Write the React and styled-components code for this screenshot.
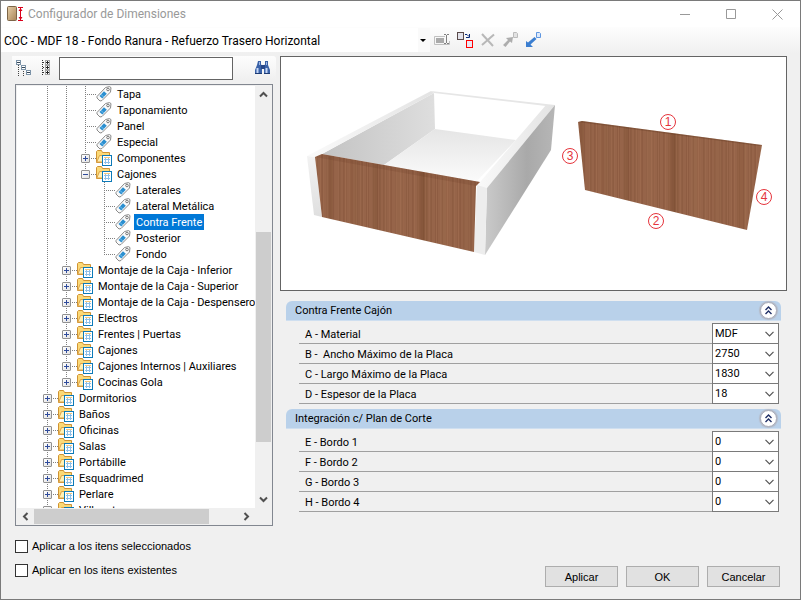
import { useState } from 'react'
import styled, { createGlobalStyle } from 'styled-components'

const tree = [
  { label: 'Tapa', type: 'tag', guides: 'll', end: 'mid' },
  { label: 'Taponamiento', type: 'tag', guides: 'll', end: 'mid' },
  { label: 'Panel', type: 'tag', guides: 'll', end: 'mid' },
  { label: 'Especial', type: 'tag', guides: 'll', end: 'mid' },
  { label: 'Componentes', type: 'folder', guides: 'll', end: 'mid' },
  { label: 'Cajones', type: 'folder', guides: 'll', end: 'last', open: true },
  { label: 'Laterales', type: 'tag', guides: 'll-', end: 'mid' },
  { label: 'Lateral Metálica', type: 'tag', guides: 'll-', end: 'mid' },
  { label: 'Contra Frente', type: 'tag', guides: 'll-', end: 'mid' },
  { label: 'Posterior', type: 'tag', guides: 'll-', end: 'mid' },
  { label: 'Fondo', type: 'tag', guides: 'll-', end: 'last' },
  { label: 'Montaje de la Caja - Inferior', type: 'folder', guides: 'l', end: 'mid' },
  { label: 'Montaje de la Caja - Superior', type: 'folder', guides: 'l', end: 'mid' },
  { label: 'Montaje de la Caja - Despensero', type: 'folder', guides: 'l', end: 'mid' },
  { label: 'Electros', type: 'folder', guides: 'l', end: 'mid' },
  { label: 'Frentes | Puertas', type: 'folder', guides: 'l', end: 'mid' },
  { label: 'Cajones', type: 'folder', guides: 'l', end: 'mid' },
  { label: 'Cajones Internos | Auxiliares', type: 'folder', guides: 'l', end: 'mid' },
  { label: 'Cocinas Gola', type: 'folder', guides: 'l', end: 'last' },
  { label: 'Dormitorios', type: 'folder', guides: '', end: 'mid' },
  { label: 'Baños', type: 'folder', guides: '', end: 'mid' },
  { label: 'Oficinas', type: 'folder', guides: '', end: 'mid' },
  { label: 'Salas', type: 'folder', guides: '', end: 'mid' },
  { label: 'Portábille', type: 'folder', guides: '', end: 'mid' },
  { label: 'Esquadrimed', type: 'folder', guides: '', end: 'mid' },
  { label: 'Perlare', type: 'folder', guides: '', end: 'mid' },
  { label: 'Villanet', type: 'folder', guides: '', end: 'mid' },
]

const groups = [
  {
    title: 'Contra Frente Cajón',
    fields: [
      { id: 'a', label: 'A - Material', value: 'MDF' },
      { id: 'b', label: 'B -  Ancho Máximo de la Placa', value: '2750' },
      { id: 'c', label: 'C - Largo Máximo de la Placa', value: '1830' },
      { id: 'd', label: 'D - Espesor de la Placa', value: '18' },
    ],
  },
  {
    title: 'Integración c/ Plan de Corte',
    fields: [
      { id: 'e', label: 'E - Bordo 1', value: '0' },
      { id: 'f', label: 'F - Bordo 2', value: '0' },
      { id: 'g', label: 'G - Bordo 3', value: '0' },
      { id: 'h', label: 'H - Bordo 4', value: '0' },
    ],
  },
]

/* icons */
const AppIcon = () => (
  <svg width="16" height="16" viewBox="0 0 16 16" aria-hidden="true">
    <defs>
      <linearGradient id="door" x1="0" y1="0" x2="1" y2="1">
        <stop offset="0" stopColor="#e6cfa8" />
        <stop offset="1" stopColor="#a98558" />
      </linearGradient>
    </defs>
    <rect x="0.5" y="0.5" width="9" height="14" rx="1" fill="url(#door)" stroke="#7d6547" />
    <path d="M11 1.5h5M11 14.5h5M13.500 2v12" stroke="#d9001b" />
    <path d="M11.500 5l2-3 2 3zM11.500 11l2 3 2-3z" fill="#d9001b" />
  </svg>
)

const RenameIcon = () => (
  <svg width="16" height="16" viewBox="0 0 16 16" aria-hidden="true">
    <path d="M11 4.500H.5v8H15.500V9" fill="none" stroke="#c0c0c0" />
    <rect x="2" y="6" width="8" height="5" fill="#aaa" />
    <path d="M10 2.500h2M13 2.500h2M12.500 3v8M10 11.500h2M13 11.500h2" stroke="#808080" />
  </svg>
)

const CopyIcon = () => (
  <svg width="16" height="16" viewBox="0 0 16 16" aria-hidden="true">
    <rect x="0.500" y="0.500" width="6" height="7" fill="#e2e2ea" stroke="#5a4a4a" />
    <rect x="9.500" y="8.500" width="6" height="7" fill="#e8e8f4" stroke="#f00" />
    <path d="M8 2.500h2l2 2M12.500 2v3.500H9" fill="none" stroke="#0a2a7a" />
  </svg>
)

const DeleteIcon = () => (
  <svg width="16" height="16" viewBox="0 0 16 16" aria-hidden="true">
    <path d="M2 2l11 12" stroke="#b8b8b8" strokeWidth="2" />
    <path d="M14 2.500L2 13" stroke="#b8b8b8" strokeWidth="2" />
  </svg>
)

const ExportIcon = () => (
  <svg width="16" height="16" viewBox="0 0 16 16" aria-hidden="true">
    <path d="M10.500.5h3l1 1v4h-4z" fill="#e3e3e3" stroke="#bcbcbc" />
    <path d="M0 13l5-5-2-2 7-1-1 6-2-1.500L2.500 15z" fill="#adadad" />
  </svg>
)

const ImportIcon = () => (
  <svg width="16" height="16" viewBox="0 0 16 16" aria-hidden="true">
    <path d="M10.500.5h3l1 1v4h-4z" fill="#dce9fb" stroke="#5f96e0" />
    <path d="M0 15V9l2 1.500L8.500 5l2 2-6 5.500L7 15z" fill="#3b7ed0" />
  </svg>
)

const CollapseTreeIcon = () => (
  <svg width="16" height="16" viewBox="0 0 16 16" aria-hidden="true">
    <path d="M2.500 5v11M7.500 9v7M5 6.500h2M10 11.500h2" stroke="#444" strokeDasharray="1 1" />
    <g fill="#fff" stroke="#7c93a8">
      <rect x="0.500" y="0.500" width="4" height="4" />
      <rect x="5.500" y="5.500" width="4" height="4" />
      <rect x="10.500" y="10.500" width="4" height="4" />
    </g>
    <path d="M1 2.500h3M6 7.500h3M11 12.500h3" stroke="#345" />
  </svg>
)

const ExpandTreeIcon = () => (
  <svg width="16" height="16" viewBox="0 0 16 16" aria-hidden="true">
    <path d="M3.500 0v16M4 2.500h2M4 7.500h2M4 12.500h2" stroke="#333" strokeDasharray="1 1" />
    <g fill="#fff" stroke="#a5a5a5">
      <rect x="6.500" y="0.500" width="4" height="4" />
      <rect x="6.500" y="5.500" width="4" height="4" />
      <rect x="6.500" y="10.500" width="4" height="4" />
    </g>
    <path d="M7 2.500h3M8.500 1v3M7 7.500h3M8.500 6v3M7 12.500h3M8.500 11v3" stroke="#222" />
  </svg>
)

const BinocularsIcon = () => (
  <svg width="16" height="16" viewBox="0 0 16 16" aria-hidden="true">
    <path d="M3 1h3v3l1 3v7H0v-4l2-5zM10 1h3v4l2 5v4H9V7l1-3z" fill="#3a62a8" />
    <path d="M6 5h4v4H6z" fill="#27488a" />
    <path d="M2.500 8v5M11.500 8v5" stroke="#c6d7f5" strokeWidth="2" />
    <path d="M4.500 2v3M11.500 2v3" stroke="#9db8e6" />
    <path d="M0 13.500h7M9 13.500h6" stroke="#1d3b73" />
  </svg>
)

const TagIcon = () => (
  <svg width="16" height="16" viewBox="0 0 16 16" aria-hidden="true">
    <path d="M1 10.500L9.500 1.500 13.500.6l1.500 1-.5 4.400L6 14.500l-2 .5-3-3z" fill="#fafafa" stroke="#8a8a8a" />
    <path d="M3.500 10L8 5.200l2.800 2.600-4.500 4.800z" fill="#2b8fd0" />
    <path d="M5 8.500l3 2.800" stroke="#74bdea" />
    <circle cx="12" cy="3.500" r="1.300" fill="#fff" stroke="#777" />
  </svg>
)

const FolderIcon = () => (
  <svg width="16" height="16" viewBox="0 0 16 16" aria-hidden="true">
    <path d="M.5 12.500v-11l1-1h4l1 2h7v3l1 1v6z" fill="#fbd977" stroke="#cf9334" />
    <path d="M.8 12L3.500 5.500h11L12 12z" fill="#fff0b5" stroke="#dca247" />
    <rect x="6.500" y="5.500" width="9" height="10" fill="#fff" stroke="#0d7ab8" />
    <path d="M8 9.500h6M8 12.500h6M9.500 8v6M12.500 8v6" stroke="#8fc0e8" />
    <path d="M8 7.500h6" stroke="#f4c97e" />
  </svg>
)

const Chevron = () => (
  <svg width="9" height="6" viewBox="0 0 9 6" aria-hidden="true">
    <path d="M.5.800l4 4 4-4" fill="none" stroke="#555" strokeWidth="1.200" />
  </svg>
)

const DoubleChevron = () => (
  <svg width="9" height="9" viewBox="0 0 9 9" aria-hidden="true">
    <path d="M1.500 4l3-3 3 3M1.500 8l3-3 3 3" fill="none" stroke="#1f2f66" strokeWidth="1.400" />
  </svg>
)

const ScrollArrow = ({ d }) => (
  <svg width="9" height="9" viewBox="0 0 9 9" aria-hidden="true">
    <path d={d} fill="none" stroke="#505050" strokeWidth="2" />
  </svg>
)

/* wood grain: soft vertical streaks of uneven width */
const grain = Array.from({ length: 150 }, (_, i) => ({
  x: (i * 97) % 251,
  width: 1 + ((i * 7) % 5) * ((i * 3) % 4 === 0 ? 2 : 0),
  light: i % 3 === 0,
  opacity: 0.05 + ((i * 13) % 8) / 90,
}))

const marks = [
  { n: 1, x: 388, y: 67 },
  { n: 2, x: 376, y: 166 },
  { n: 3, x: 290, y: 101 },
  { n: 4, x: 484, y: 142 },
]

const Drawing = () => (
  <svg width="100%" height="233" viewBox="1 2 505 233" role="img" aria-label="Contra Frente">
    <defs>
      <pattern id="wood" width="251" height="240" patternUnits="userSpaceOnUse">
        <rect width="251" height="240" fill="#966449" />
        {grain.map((g, i) => (
          <rect
            key={i}
            x={g.x}
            width={g.width}
            height="240"
            fill={g.light ? '#c08b68' : '#54290f'}
            opacity={g.opacity}
          />
        ))}
      </pattern>
      <linearGradient id="inner" x1="0" x2="1">
        <stop offset="0" stopColor="#c3c3c3" />
        <stop offset="1" stopColor="#dedede" />
      </linearGradient>
      <linearGradient id="floor" x1="0.500" y1="0" x2="0.500" y2="1">
        <stop offset="0" stopColor="#e5e5e5" />
        <stop offset="1" stopColor="#fbfbfb" />
      </linearGradient>
      <linearGradient id="outer" x1="0" x2="1">
        <stop offset="0" stopColor="#cacaca" />
        <stop offset="0.600" stopColor="#a9a9a9" />
        <stop offset="1" stopColor="#b6b6b6" />
      </linearGradient>
      <linearGradient id="endLeft" x1="0" y1="0" x2="0" y2="1">
        <stop offset="0" stopColor="#f2f2f2" />
        <stop offset="1" stopColor="#dfdfdf" />
      </linearGradient>
      <linearGradient id="rim" x1="0" x2="1">
        <stop offset="0" stopColor="#fafafa" />
        <stop offset="1" stopColor="#e3e3e3" />
      </linearGradient>
    </defs>
    <path d="M42 99L154 38l1 36-51 36z" fill="url(#inner)" />
    <path d="M155 74l81 11-40 42-92-17z" fill="url(#floor)" />
    <path d="M27 101L151 36l3 2L42 99l-7 3z" fill="url(#rim)" />
    <path d="M151 36l124 14-9 1-112-13z" fill="#e6e6e6" />
    <path d="M266 50l9 0-68 83-11-2 4-4z" fill="url(#rim)" />
    <path d="M275 50l-4 45-66 105 2-67z" fill="url(#outer)" />
    <path d="M27 101l8 1 7 60-8-2z" fill="url(#endLeft)" />
    <path d="M197 130l10 3-2 67-11-3z" fill="#ededed" />
    <path d="M35 102l7-3 158 28-4 4-2 66L42 162z" fill="url(#wood)" />
    <path d="M35 102l7-3 158 28-4 4z" fill="#5b321c" opacity="0.150" />
    <path d="M298 67l4-1 180 24-15 85-162-40z" fill="url(#wood)" />
    <path d="M298 67l4-1 180 24-3 1z" fill="#5b321c" opacity="0.300" />
    {marks.map(({ n, x, y }) => (
      <g key={n}>
        <circle cx={x} cy={y} r="7.500" fill="#fff" stroke="#e5343c" />
        <MarkText x={x} y={y + 4} textAnchor="middle">{n}</MarkText>
      </g>
    ))}
  </svg>
)

const TreeItem = ({ item, selected, onSelect }) => (
  <TreeRow>
    {item.guides.split('').map((g, index) => (
      <Guide key={index} $line={g === 'l'} />
    ))}
    <Branch $last={item.end === 'last'}>
      {item.type === 'folder' && (
        <Expander type="button" aria-label={item.label} aria-expanded={!!item.open}>
          <svg width="7" height="7" viewBox="0 0 7 7" aria-hidden="true">
            <path d={item.open ? 'M1 3.500h5' : 'M1 3.500h5M3.500 1v5'} stroke="#2f4b9b" />
          </svg>
        </Expander>
      )}
    </Branch>
    {item.type === 'tag' ? <TagIcon /> : <FolderIcon />}
    <NodeLabel type="button" $selected={selected} onClick={onSelect}>{item.label}</NodeLabel>
  </TreeRow>
)

const Group = ({ group }) => (
  <GroupBox>
    <GroupHeader>
      <h2>{group.title}</h2>
      <CollapseButton type="button" aria-label={`Contraer ${group.title}`}>
        <DoubleChevron />
      </CollapseButton>
    </GroupHeader>
    <Fields>
      {group.fields.map((field) => (
        <FieldRow key={field.id}>
          <label htmlFor={`field-${field.id}`}>{field.label}</label>
          <SelectWrap>
            <select id={`field-${field.id}`} defaultValue={field.value}>
              <option>{field.value}</option>
            </select>
            <Chevron />
          </SelectWrap>
        </FieldRow>
      ))}
    </Fields>
  </GroupBox>
)

const App = () => {
  const [selected, setSelected] = useState(8)

  return (
    <>
      <GlobalStyle />
      <Window>
        <TitleBar>
          <AppIcon />
          <h1>Configurador de Dimensiones</h1>
          <WindowButton type="button" aria-label="Minimizar">
            <svg width="11" height="11" viewBox="0 0 11 11"><path d="M0 5.500h10" stroke="#999" /></svg>
          </WindowButton>
          <WindowButton type="button" aria-label="Maximizar">
            <svg width="11" height="11" viewBox="0 0 11 11"><path d="M.5.5h9v9h-9z" fill="none" stroke="#999" /></svg>
          </WindowButton>
          <WindowButton type="button" aria-label="Cerrar">
            <svg width="11" height="11" viewBox="0 0 11 11"><path d="M.5.5l10 10M10.500.5l-10 10" stroke="#999" /></svg>
          </WindowButton>
        </TitleBar>

        <Toolbar>
          <ModelSelect>
            <select aria-label="Modelo">
              <option>COC - MDF 18 - Fondo Ranura - Refuerzo Trasero Horizontal</option>
            </select>
            <svg width="6" height="3" viewBox="0 0 6 3" aria-hidden="true"><path d="M0 0h6L3 3z" /></svg>
          </ModelSelect>
          <ToolButton type="button" aria-label="Renombrar"><RenameIcon /></ToolButton>
          <ToolButton type="button" aria-label="Copiar"><CopyIcon /></ToolButton>
          <ToolButton type="button" aria-label="Eliminar"><DeleteIcon /></ToolButton>
          <ToolButton type="button" aria-label="Exportar"><ExportIcon /></ToolButton>
          <ToolButton type="button" aria-label="Importar"><ImportIcon /></ToolButton>
        </Toolbar>

        <Body>
          <SidePanel>
            <SearchBar>
              <ToolButton type="button" aria-label="Contraer todo"><CollapseTreeIcon /></ToolButton>
              <ToolButton type="button" aria-label="Expandir todo"><ExpandTreeIcon /></ToolButton>
              <input type="text" aria-label="Buscar" />
              <ToolButton type="button" aria-label="Buscar siguiente"><BinocularsIcon /></ToolButton>
            </SearchBar>
            <TreeBox>
              <TreeView>
                {tree.map((item, index) => (
                  <TreeItem
                    key={index}
                    item={item}
                    selected={index === selected}
                    onSelect={() => setSelected(index)}
                  />
                ))}
              </TreeView>
              <VerticalBar>
                <ScrollArrow d="M1 6.500L4.500 3 8 6.500" />
                <VerticalThumb />
                <ScrollArrow d="M1 2.500L4.500 6 8 2.500" />
              </VerticalBar>
              <HorizontalBar>
                <ScrollArrow d="M6.500 1L3 4.500 6.500 8" />
                <HorizontalThumb />
                <ScrollArrow d="M2.500 1L6 4.500 2.500 8" />
              </HorizontalBar>
            </TreeBox>
          </SidePanel>

          <MainPanel>
            <Preview><Drawing /></Preview>
            {groups.map((group) => <Group key={group.title} group={group} />)}
          </MainPanel>
        </Body>

        <Footer>
          <Checks>
            <CheckLabel><input type="checkbox" />Aplicar a los itens seleccionados</CheckLabel>
            <CheckLabel><input type="checkbox" />Aplicar en los itens existentes</CheckLabel>
          </Checks>
          <Actions>
            <ActionButton type="button">Aplicar</ActionButton>
            <ActionButton type="button">OK</ActionButton>
            <ActionButton type="button">Cancelar</ActionButton>
          </Actions>
        </Footer>
      </Window>
    </>
  )
}

const GlobalStyle = createGlobalStyle`
  * {
    box-sizing: border-box;
  }
  body {
    margin: 0;
    color: #000;
    background: #f0f0f0;
    font: 11px/16px Roboto, "Liberation Sans", sans-serif;
  }
  h1, h2 {
    margin: 0;
    font-weight: 400;
  }
  button, input, select {
    margin: 0;
    padding: 0;
    border: 0;
    border-radius: 0;
    color: inherit;
    background: transparent;
    font: inherit;
  }
  svg {
    display: block;
    flex: none;
  }
`

const Window = styled.div`
  display: flex;
  flex-direction: column;
  height: 100vh;
  min-height: 600px;
  border: 1px solid #7a7a7a;
  background: #f0f0f0;
`

const TitleBar = styled.header`
  display: flex;
  align-items: center;
  height: 26px;
  padding-left: 6px;
  background: #fff;

  h1 {
    flex: 1;
    margin-left: 5px;
    color: #999;
    font-size: 12px;
    line-height: 16px;
  }
`

const WindowButton = styled.button`
  display: grid;
  place-items: center;
  width: 46px;
  height: 24px;
`

const Toolbar = styled.div`
  display: flex;
  align-items: center;
  height: 26px;
  background: linear-gradient(#fdfdfd, #f0f0f0);
`

const ModelSelect = styled.div`
  display: flex;
  align-items: center;
  width: 429px;
  height: 24px;
  padding-right: 4px;
  background: linear-gradient(to left, #fafafa 12px, #fff 12px);

  select {
    flex: 1;
    height: 24px;
    padding: 2px 0 0 3px;
    appearance: none;
    font-size: 12px;
  }
`

const ToolButton = styled.button`
  display: grid;
  place-items: center;
  width: 23px;
  height: 22px;
`

const Body = styled.main`
  display: flex;
  gap: 4px;
  flex: 1;
  min-height: 0;
  padding: 3px 13px 0 11px;
`

const SidePanel = styled.section`
  display: flex;
  flex-direction: column;
  flex: none;
  width: 264px;
`

const SearchBar = styled.div`
  display: flex;
  align-items: center;
  height: 24px;
  margin-bottom: 4px;
  border-radius: 0 3px 3px 0;
  background: linear-gradient(#fdfdfd, #f0f0f0);

  input {
    width: 174px;
    height: 23px;
    margin: 0 18px 0 1px;
    padding: 0 4px;
    border: 1px solid #646464;
    background: #fff;
  }
`

const TreeBox = styled.div`
  display: grid;
  grid-template-columns: 1fr 16px;
  grid-template-rows: 1fr 16px;
  flex: 1;
  min-height: 0;
  margin: 0 3px;
  padding: 1px;
  border: 1px solid #828790;
  background: #f0f0f0;
`

const TreeView = styled.ul`
  min-height: 0;
  margin: 0;
  padding: 0 0 0 21px;
  overflow: hidden;
  list-style: none;
  background: #fff;
`

const TreeRow = styled.li`
  display: flex;
  height: 16px;
`

const Guide = styled.span`
  flex: none;
  width: 19px;
  height: 16px;
  background: ${({ $line }) => $line
    ? 'repeating-linear-gradient(#808080 0 1px, transparent 1px 2px) 9px 0 / 1px 16px no-repeat'
    : 'none'};
`

const Branch = styled.span`
  flex: none;
  width: 20px;
  height: 16px;
  padding: 4px 0 0 5px;
  background:
    repeating-linear-gradient(#808080 0 1px, transparent 1px 2px) 9px 0 / 1px ${({ $last }) => ($last ? 8 : 16)}px no-repeat,
    repeating-linear-gradient(to right, #808080 0 1px, transparent 1px 2px) 9px 8px / 11px 1px no-repeat;
`

const Expander = styled.button`
  display: grid;
  place-items: center;
  width: 9px;
  height: 9px;
  border: 1px solid #919191;
  border-radius: 1px;
  background: linear-gradient(135deg, #fff, #e2e2e2);
`

const NodeLabel = styled.button`
  height: 16px;
  margin-left: 3px;
  padding: 2px 2px 0;
  line-height: 14px;
  white-space: nowrap;
  color: ${({ $selected }) => ($selected ? '#fff' : '#000')};
  background: ${({ $selected }) => ($selected ? '#0078d7' : 'transparent')};
`

const VerticalBar = styled.div`
  display: flex;
  flex-direction: column;
  align-items: center;
  padding: 4px 0;
`

const VerticalThumb = styled.div`
  width: 15px;
  height: 210px;
  margin: auto 0 53px;
  background: #cdcdcd;
`

const HorizontalBar = styled.div`
  display: flex;
  align-items: center;
  padding: 0 4px;
`

const HorizontalThumb = styled.div`
  width: 175px;
  height: 15px;
  margin: 0 auto 0 4px;
  background: #cdcdcd;
`

const MainPanel = styled.section`
  flex: 1;
  min-width: 0;
`

const Preview = styled.div`
  margin-bottom: 10px;
  border: 1px solid #646464;
  background: #fff;
`

const MarkText = styled.text`
  fill: #e5343c;
  font: 12px "Liberation Sans", Arial, sans-serif;
`

const GroupBox = styled.section`
  margin: 0 6px 5px;
`

const GroupHeader = styled.div`
  display: flex;
  align-items: center;
  justify-content: space-between;
  height: 20px;
  padding: 0 4px 0 9px;
  border-bottom: 1px solid #cfdff0;
  border-radius: 6px 6px 0 0;
  background: #b9d1ea;

  h2 {
    padding-top: 1px;
    font-size: 11px;
    line-height: 16px;
  }
`

const CollapseButton = styled.button`
  display: grid;
  place-items: center;
  width: 17px;
  height: 17px;
  border: 1px solid #a8adba;
  border-radius: 50%;
  background: #fff;
  box-shadow: 0 0 1px 1px #b4b9c6;
`

const Fields = styled.div`
  margin: 2px 2px 0 13px;
`

const FieldRow = styled.div`
  display: flex;
  align-items: flex-end;
  height: 20px;
  border-bottom: 1px solid #a0a0a0;

  &:first-child {
    height: 21px;
  }

  label {
    flex: 1;
    padding-left: 6px;
    white-space: pre;
  }
`

const SelectWrap = styled.div`
  display: flex;
  align-items: center;
  align-self: stretch;
  width: 67px;
  margin-bottom: -1px;
  padding-right: 4px;
  border: 1px solid #7a7a7a;
  border-top-width: 0;
  background: #fff;

  ${FieldRow}:first-child & {
    border-top-width: 1px;
  }

  select {
    flex: 1;
    min-width: 0;
    height: 18px;
    padding-left: 2px;
    appearance: none;
  }
`

const Footer = styled.footer`
  display: flex;
  align-items: flex-end;
  justify-content: space-between;
  padding: 12px 20px 12px 14px;
  font-family: "Liberation Sans", Arial, sans-serif;
`

const Checks = styled.div`
  display: flex;
  flex-direction: column;
  gap: 8px;
  padding-bottom: 9px;
`

const CheckLabel = styled.label`
  display: flex;
  align-items: center;
  gap: 4px;

  input {
    width: 13px;
    height: 13px;
    border: 1px solid #333;
    appearance: none;
    background: #fff;
  }
  input:checked {
    background: #333;
  }
`

const Actions = styled.div`
  display: flex;
  gap: 8px;
`

const ActionButton = styled.button`
  width: 73px;
  height: 21px;
  border: 1px solid #adadad;
  background: #e1e1e1;
`

export default App
